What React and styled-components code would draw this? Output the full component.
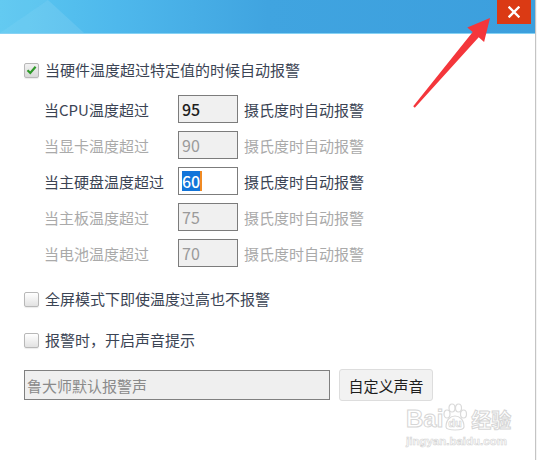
import React from 'react';
import styled, { createGlobalStyle } from 'styled-components';

const GlobalStyle = createGlobalStyle`
  html, body {
    margin: 0;
    padding: 0;
    background: #f4f4f4;
  }
  body {
    font-family: "Noto Sans CJK SC", "Noto Sans", sans-serif;
  }
`;

const temps = [
  { label: '当CPU温度超过', value: '95', enabled: true },
  { label: '当显卡温度超过', value: '90' },
  { label: '当主硬盘温度超过', value: '60', enabled: true, focused: true },
  { label: '当主板温度超过', value: '75' },
  { label: '当电池温度超过', value: '70' },
];

const App = () => {
  return (
    <>
      <GlobalStyle />
      <Window>
        <TitleBar>
          <TitleDeco width="200" height="33" viewBox="0 0 200 33">
            <polygon points="0,33 48,0 84,33" fill="#ffffff" opacity="0.1" />
            <polygon points="0,0 48,0 0,33" fill="#ffffff" opacity="0.05" />
          </TitleDeco>
          <CloseButton>
            <svg width="12" height="12" viewBox="0 0 12 12">
              <path d="M1.5 1.5 L10.5 10.5 M10.5 1.5 L1.5 10.5" stroke="#fff" strokeWidth="2.4" strokeLinecap="square" />
            </svg>
          </CloseButton>
        </TitleBar>

        <Content>
          <CheckRow>
            <CheckBox checked>
              <svg width="11" height="10" viewBox="0 0 11 10">
                <path d="M1.5 5.2 L4.3 8 L9.6 1.8" stroke="#2f9a2a" strokeWidth="2.2" fill="none" />
              </svg>
            </CheckBox>
            当硬件温度超过特定值的时候自动报警
          </CheckRow>

          <TempList>
            {temps.map((t) => (
              <TempRow key={t.label} $enabled={t.enabled}>
                <TempLabel>{t.label}</TempLabel>
                <TempInput $enabled={t.enabled} $focused={t.focused}>
                  {t.focused ? (
                    <>
                      <Selection>{t.value}</Selection>
                      <Caret />
                    </>
                  ) : (
                    t.value
                  )}
                </TempInput>
                <Suffix>摄氏度时自动报警</Suffix>
              </TempRow>
            ))}
          </TempList>

          <CheckRow $gap={22}>
            <CheckBox />
            全屏模式下即使温度过高也不报警
          </CheckRow>

          <CheckRow $gap={21}>
            <CheckBox />
            报警时，开启声音提示
          </CheckRow>

          <SoundRow>
            <SoundField>鲁大师默认报警声</SoundField>
            <Button>自定义声音</Button>
          </SoundRow>
        </Content>

        <Watermark>
          <LogoLine>
            <span>Bai</span>
            <Paw>
              <svg width="30" height="30" viewBox="0 0 30 30">
                <g fill="#fff" stroke="#dadada" strokeWidth="1.2">
                  <ellipse cx="7" cy="11" rx="3" ry="4" />
                  <ellipse cx="12" cy="5" rx="3" ry="4" />
                  <ellipse cx="18.5" cy="5" rx="3" ry="4" />
                  <ellipse cx="23.5" cy="11" rx="3" ry="4" />
                  <path d="M6 24 C6 16 11 13 15 13 C19 13 24 16 24 24 C24 28 6 28 6 24 Z" />
                </g>
              </svg>
              <PawText>du</PawText>
            </Paw>
            <Cn>经验</Cn>
          </LogoLine>
          <Url>jingyan.baidu.com</Url>
        </Watermark>

        <Arrow width="537" height="460" viewBox="0 0 537 460">
          <polygon
            points="490,18 484.1,41.9 478.7,37.3 414.8,107.7 413.2,106.3 472.7,32.1 467.3,27.5"
            fill="#f4363b"
          />
        </Arrow>
      </Window>
    </>
  );
};

const Window = styled.div`
  position: relative;
  width: 535px;
  height: 460px;
  background: #ffffff;
  border-right: 1px solid #c4c4c4;
  overflow: hidden;
  color: #3b4454;
  font-size: 15px;
`;

const TitleBar = styled.div`
  position: relative;
  height: 33px;
  background: linear-gradient(90deg, #5bc8f1 0%, #4eb8ec 22%, #40a4e0 50%, #3c9fdd 100%);
  border-bottom: 1px solid #86d2f4;
  display: flex;
  justify-content: flex-end;
  align-items: flex-start;
  padding-right: 4px;
`;

const TitleDeco = styled.svg`
  position: absolute;
  left: 0;
  top: 0;
`;

const CloseButton = styled.div`
  width: 34px;
  height: 24px;
  background: #db3a14;
  display: flex;
  align-items: center;
  justify-content: center;
`;

const Content = styled.div`
  display: flex;
  flex-direction: column;
  padding: 26px 0 0 24px;
`;

const CheckRow = styled.div`
  display: flex;
  align-items: center;
  gap: 6px;
  height: 20px;
  line-height: 20px;
  margin-top: ${(p) => p.$gap || 0}px;
  color: #3b4454;
`;

const CheckBox = styled.span`
  width: 13px;
  height: 13px;
  border: 1px solid #b8b8b8;
  border-radius: 2px;
  background: ${(p) =>
    p.checked
      ? 'linear-gradient(180deg, #f2f2f2, #d8d8d8)'
      : 'linear-gradient(180deg, #ffffff, #e2e2e2)'};
  box-shadow: 0 1px 1px rgba(0, 0, 0, 0.08);
  display: flex;
  align-items: center;
  justify-content: center;
`;

const TempList = styled.div`
  display: flex;
  flex-direction: column;
  gap: 8px;
  margin-top: 15px;
  padding-left: 20px;
`;

const TempRow = styled.div`
  display: flex;
  align-items: center;
  height: 28px;
  color: ${(p) => (p.$enabled ? '#3b4454' : '#aaaaaa')};
`;

const TempLabel = styled.span`
  width: 134px;
`;

const TempInput = styled.div`
  box-sizing: border-box;
  width: 60px;
  height: 28px;
  border: 1px solid #7c7c7c;
  background: ${(p) => (p.$focused ? '#ffffff' : '#f0f0f0')};
  color: ${(p) => (p.$enabled ? '#1e1e1e' : '#9a9a9a')};
  font-size: 16px;
  font-weight: ${(p) => (p.$enabled ? 500 : 400)};
  padding-left: 3px;
  display: flex;
  align-items: center;
`;

const Selection = styled.span`
  background: #1274d9;
  color: #ffffff;
  line-height: 20px;
`;

const Caret = styled.span`
  width: 2px;
  height: 20px;
  background: #f08a24;
`;

const Suffix = styled.span`
  margin-left: 6px;
`;

const SoundRow = styled.div`
  display: flex;
  align-items: center;
  gap: 9px;
  margin-top: 19px;
  height: 32px;
`;

const SoundField = styled.div`
  box-sizing: border-box;
  width: 306px;
  height: 30px;
  border: 1px solid #808080;
  background: #efefef;
  color: #8a8a8a;
  padding-left: 2px;
  display: flex;
  align-items: center;
`;

const Button = styled.div`
  box-sizing: border-box;
  width: 94px;
  height: 32px;
  border: 1px solid #dddddd;
  border-radius: 3px;
  background: #f2f2f2;
  color: #1e1e1e;
  display: flex;
  align-items: center;
  justify-content: center;
`;

const Watermark = styled.div`
  position: absolute;
  left: 406px;
  top: 403px;
  display: flex;
  flex-direction: column;
  align-items: flex-start;
  color: #ffffff;
  -webkit-text-stroke: 1px #d6d6d6;
  font-family: "Liberation Sans", sans-serif;
`;

const LogoLine = styled.div`
  display: flex;
  align-items: flex-end;
  font-size: 24px;
  font-weight: bold;
  line-height: 28px;
`;

const Paw = styled.span`
  position: relative;
  width: 30px;
  height: 30px;
  margin-left: -3px;
  svg {
    display: block;
  }
`;

const PawText = styled.span`
  position: absolute;
  left: 8px;
  top: 14px;
  font-size: 11px;
  line-height: 12px;
  -webkit-text-stroke: 0.6px #cfcfcf;
`;

const Cn = styled.span`
  font-family: "Noto Sans CJK SC", sans-serif;
  font-size: 20px;
  margin-left: 1px;
  line-height: 26px;
`;

const Url = styled.span`
  font-size: 11.5px;
  font-weight: bold;
  -webkit-text-stroke: 0.6px #d4d4d4;
  margin-top: 2px;
`;

const Arrow = styled.svg`
  position: absolute;
  left: 0;
  top: 0;
  pointer-events: none;
`;

export default App;
